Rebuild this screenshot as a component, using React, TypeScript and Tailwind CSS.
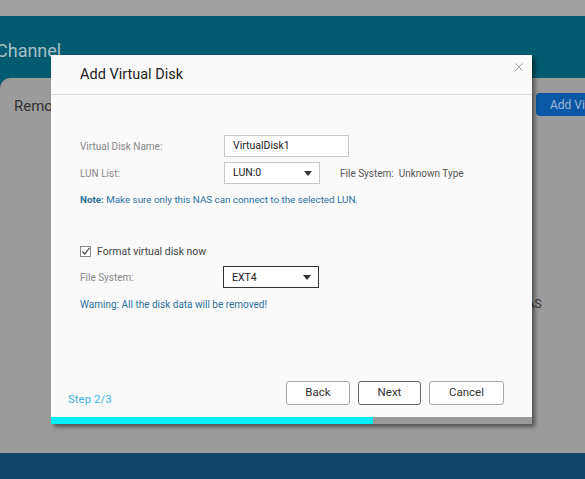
import { X } from 'lucide-react'

const font = { fontFamily: 'Roboto, "Liberation Sans", sans-serif' }

function SelectBox({ value, dark }: { value: string; dark?: boolean }) {
  return (
    <div
      className={`flex h-[22px] w-[96px] items-center justify-between bg-white pl-[8px] pr-[7px] text-[10.5px] text-[#222] ${
        dark ? 'border border-[#333]' : 'border border-[#c8c8c8]'
      }`}
    >
      <span>{value}</span>
      <svg width="8" height="5" viewBox="0 0 8 5">
        <path d="M0 0h8L4 5z" fill="#333" />
      </svg>
    </div>
  )
}

function DialogButton({ label, dark }: { label: string; dark?: boolean }) {
  return (
    <button
      className={`flex h-[24px] w-full items-center justify-center rounded-[3px] bg-white text-[11.5px] text-[#333] ${
        dark ? 'border border-[#666]' : 'border border-[#a8a8a8]'
      }`}
    >
      {label}
    </button>
  )
}

export default function App() {
  return (
    <div className="relative h-[479px] w-[585px] overflow-hidden bg-[#0e4565]" style={font}>
      {/* page behind the overlay (already dimmed colours) */}
      <div className="h-[16px] bg-[#a0a0a0]" />
      <div className="bg-[#015a6e]">
        <div className="h-[62px] pt-[24px] text-[18px] leading-[22px] text-[#a7bfc5]">
          <span className="ml-[-4px]">Channel</span>
        </div>
        <div className="relative h-[375px] rounded-tl-[10px] bg-[#9b9b9b]">
          <div className="pl-[14px] pt-[17px] text-[15px] text-[#333]">Remo</div>
          <button className="absolute left-[536px] top-[15px] h-[23px] w-[80px] rounded-[4px] bg-[#0b57a6] pl-[14px] text-left text-[12px] text-[#9fb8d6]">
            Add Virtual
          </button>
          <div className="absolute left-[518px] top-[217px] text-[12px] text-[#333]">NAS</div>
        </div>
      </div>

      {/* modal */}
      <div className="absolute left-[51px] top-[55px] flex h-[369px] w-[481px] flex-col bg-[#fafafa] shadow-[3px_3px_4px_rgba(0,0,0,0.45)]">
        <div className="relative flex h-[40px] shrink-0 items-center border-b border-[#dcdcdc] pl-[29px] text-[14.5px] text-[#222]">
          Add Virtual Disk
          <X className="absolute right-[6px] top-[5px] h-[14px] w-[14px] text-[#a0a0a0]" strokeWidth={1.6} />
        </div>

        <div className="flex flex-1 flex-col pl-[29px] pt-[40px] text-[10px]">
          <div className="flex h-[22px] items-center">
            <span className="w-[144px] text-[#888]">Virtual Disk Name:</span>
            <div className="flex h-[22px] w-[125px] items-center border border-[#c8c8c8] bg-white pl-[8px] text-[10.5px] text-[#222]">
              VirtualDisk1
            </div>
          </div>
          <div className="mt-[5px] flex h-[22px] items-center">
            <span className="w-[144px] text-[#888]">LUN List:</span>
            <SelectBox value="LUN:0" />
            <span className="ml-[20px] text-[10px] text-[#555]">File System:&nbsp; Unknown Type</span>
          </div>
          <div className="mt-[9px] text-[9.8px] text-[#2f6f9d]">
            <span className="font-bold">Note:</span> Make sure only this NAS can connect to the selected LUN.
          </div>

          <div className="mt-[36px] flex items-center gap-[6px] text-[10.5px] text-[#444]">
            <svg width="11" height="11" viewBox="0 0 11 11">
              <rect x="0.5" y="0.5" width="10" height="10" fill="#fff" stroke="#888" />
              <path d="M2.5 5.5l2.2 2.5L9.5 1.8" fill="none" stroke="#444" strokeWidth="1.2" />
            </svg>
            Format virtual disk now
          </div>
          <div className="mt-[7px] flex h-[22px] items-center">
            <span className="w-[143px] text-[#888]">File System:</span>
            <SelectBox value="EXT4" dark />
          </div>
          <div className="mt-[9px] text-[10px] text-[#2f6f9d]">Warning: All the disk data will be removed!</div>

          <div className="mt-auto flex items-end justify-between pb-[12px] pr-[28px]">
            <span className="ml-[-12px] mb-[-3px] text-[11.5px] text-[#3cb4dd]">Step 2/3</span>
            <div className="flex gap-[8px]">
              <div className="w-[64px]">
                <DialogButton label="Back" />
              </div>
              <div className="w-[63px]">
                <DialogButton label="Next" dark />
              </div>
              <div className="w-[75px]">
                <DialogButton label="Cancel" />
              </div>
            </div>
          </div>
        </div>

        <div className="flex h-[7px] shrink-0">
          <div className="w-[322px] bg-[#00f0fa]" />
          <div className="flex-1 bg-[#999]" />
        </div>
      </div>
    </div>
  )
}
